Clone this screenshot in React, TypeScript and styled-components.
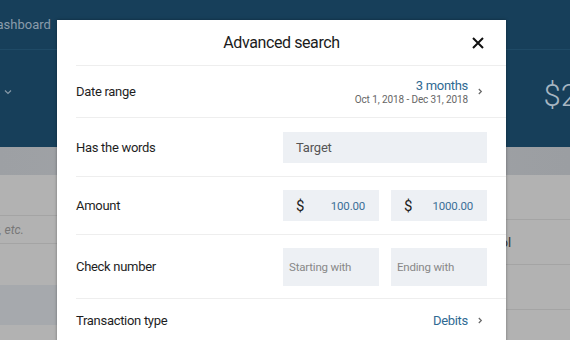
import React from "react";
import styled, { createGlobalStyle } from "styled-components";

const Global = createGlobalStyle`
  html, body { margin: 0; padding: 0; }
  body { width: 570px; height: 340px; overflow: hidden; font-family: Roboto, "Liberation Sans", sans-serif; }
`;

const Page = styled.div`
  position: relative;
  width: 570px;
  height: 340px;
  overflow: hidden;
  background: #b2b2b2;
`;

const TopBar = styled.div`
  height: 50px;
  background: #173f5a;
  border-bottom: 1px solid #1f4a66;
  display: flex;
  align-items: center;
  color: #8a9cab;
  font-size: 13px;
  padding-bottom: 2px;
  box-sizing: border-box;
  overflow: hidden;
`;

const NavText = styled.span`
  margin-left: -12px;
  margin-top: 1px;
  white-space: nowrap;
`;

const Hero = styled.div`
  height: 97px;
  background: #173f5a;
  display: flex;
  align-items: center;
  justify-content: space-between;
  overflow: hidden;
`;

const ChevDown = styled.svg`
  margin-left: 4px;
  margin-top: -14px;
`;

const Big = styled.span`
  font-size: 31px;
  font-weight: 300;
  color: #a7b6c2;
  margin-right: -8px;
  margin-top: -6px;
  white-space: nowrap;
`;

const Band = styled.div`
  height: 28px;
  background: linear-gradient(90deg, #9da0a4, #a3a5a8 40%, #9b9ea2);
`;

const Columns = styled.div`
  display: flex;
  justify-content: space-between;
`;

const LeftCol = styled.div`
  width: 57px;
  display: flex;
  flex-direction: column;
`;

const RightCol = styled.div`
  width: 64px;
  display: flex;
  flex-direction: column;
`;

const BgRow = styled.div<{ $h: number; $tint?: boolean; $line?: boolean }>`
  height: ${(p) => p.$h}px;
  box-sizing: border-box;
  background: ${(p) => (p.$tint ? "#a6a9ad" : "#b2b2b2")};
  border-bottom: ${(p) => (p.$line ? "1px solid #a4a4a4" : "none")};
  display: flex;
  align-items: center;
  overflow: hidden;
  white-space: nowrap;
  font-size: 12px;
`;

const HintLeft = styled.span`
  margin-left: -78px;
  font-style: italic;
  color: #777;
`;

const HintRight = styled.span`
  margin-left: -37px;
  color: #333;
  font-size: 13px;
`;

const Modal = styled.div`
  position: absolute;
  left: 57px;
  top: 20px;
  width: 449px;
  height: 340px;
  background: #fff;
  box-shadow: 0 0 3px rgba(0, 0, 0, 0.35);
`;

const Header = styled.div`
  height: 46px;
  display: flex;
  align-items: center;
  justify-content: center;
  position: relative;
  margin-left: 19px;
  border-bottom: 1px solid #eeeeee;
  box-sizing: border-box;
`;

const Title = styled.h2`
  margin: 0 0 0 -19px;
  font-size: 16px;
  letter-spacing: -0.4px;
  font-weight: 400;
  color: #1b1b1b;
`;

const Close = styled.button`
  position: absolute;
  right: 22px;
  top: 17px;
  width: 12px;
  height: 12px;
  padding: 0;
  border: 0;
  background: none;
  display: flex;
`;

const Row = styled.div<{ $h: number }>`
  height: ${(p) => p.$h}px;
  margin-left: 19px;
  padding-right: 19px;
  border-bottom: 1px solid #eeeeee;
  box-sizing: border-box;
  display: flex;
  align-items: center;
  justify-content: space-between;
`;

const Label = styled.span`
  font-size: 13px;
  letter-spacing: -0.3px;
  color: #1e1e1e;
`;

const Picker = styled.div`
  display: flex;
  align-items: center;
  gap: 9px;
  margin-right: 4px;
`;

const PickerText = styled.div`
  display: flex;
  flex-direction: column;
  align-items: flex-end;
`;

const Value = styled.span`
  font-size: 13px;
  letter-spacing: -0.3px;
  color: #2f6a93;
  line-height: 16px;
`;

const Sub = styled.span`
  font-size: 10px;
  letter-spacing: -0.1px;
  color: #666;
  line-height: 12px;
`;

const Fields = styled.div`
  display: flex;
  gap: 12px;
`;

const Field = styled.div<{ $w: number; $h: number }>`
  width: ${(p) => p.$w}px;
  height: ${(p) => p.$h}px;
  background: #edf0f4;
  display: flex;
  align-items: center;
  padding: 0 9px 0 13px;
  box-sizing: border-box;
  font-size: 13px;
  letter-spacing: -0.2px;
  color: #555;
`;

const Dollar = styled.span`
  font-size: 15px;
  color: #222;
  flex: 0 0 auto;
`;

const Amount = styled.span`
  margin-left: auto;
  color: #3b6f97;
  font-size: 11.5px;
  margin-right: 5px;
`;

const Placeholder = styled.span`
  color: #888;
  font-size: 11.5px;
  margin-left: -7px;
`;

const Chevron = () => (
  <svg width="6" height="9" viewBox="0 0 6 9">
    <path d="M1.8 2 L4.3 4.5 L1.8 7" fill="none" stroke="#666" strokeWidth="1.2" />
  </svg>
);

export default function App() {
  return (
    <>
      <Global />
      <Page>
        <TopBar>
          <NavText>Dashboard</NavText>
        </TopBar>
        <Hero>
          <ChevDown width="8" height="6" viewBox="0 0 8 6">
            <path d="M1 1.5 L4 4.5 L7 1.5" fill="none" stroke="#8799a8" strokeWidth="1.2" />
          </ChevDown>
          <Big>$2</Big>
        </Hero>
        <Band />
        <Columns>
          <LeftCol>
            <BgRow $h={41} $line />
            <BgRow $h={28} $line>
              <HintLeft>Payee, check #, etc.</HintLeft>
            </BgRow>
            <BgRow $h={41} />
            <BgRow $h={40} $tint />
          </LeftCol>
          <RightCol>
            <BgRow $h={45} $line />
            <BgRow $h={45} $line>
              <HintRight>Control</HintRight>
            </BgRow>
            <BgRow $h={45} $line />
            <BgRow $h={30} />
          </RightCol>
        </Columns>

        <Modal>
          <Header>
            <Title>Advanced search</Title>
            <Close aria-label="Close">
              <svg width="12" height="12" viewBox="0 0 12 12">
                <path d="M1 1 L11 11 M11 1 L1 11" stroke="#111" strokeWidth="2" />
              </svg>
            </Close>
          </Header>
          <Row $h={52}>
            <Label>Date range</Label>
            <Picker>
              <PickerText>
                <Value>3 months</Value>
                <Sub>Oct 1, 2018 - Dec 31, 2018</Sub>
              </PickerText>
              <Chevron />
            </Picker>
          </Row>
          <Row $h={59}>
            <Label>Has the words</Label>
            <Field $w={204} $h={31}>Target</Field>
          </Row>
          <Row $h={58}>
            <Label>Amount</Label>
            <Fields>
              <Field $w={96} $h={31}>
                <Dollar>$</Dollar>
                <Amount>100.00</Amount>
              </Field>
              <Field $w={96} $h={31}>
                <Dollar>$</Dollar>
                <Amount>1000.00</Amount>
              </Field>
            </Fields>
          </Row>
          <Row $h={64}>
            <Label>Check number</Label>
            <Fields>
              <Field $w={96} $h={38}>
                <Placeholder>Starting with</Placeholder>
              </Field>
              <Field $w={96} $h={38}>
                <Placeholder>Ending with</Placeholder>
              </Field>
            </Fields>
          </Row>
          <Row $h={44}>
            <Label>Transaction type</Label>
            <Picker>
              <Value>Debits</Value>
              <Chevron />
            </Picker>
          </Row>
        </Modal>
      </Page>
    </>
  );
}
